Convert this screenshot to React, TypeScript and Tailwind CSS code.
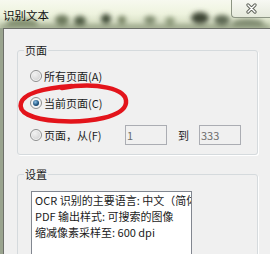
import React from "react";

function Radio({ checked }: { checked?: boolean }) {
  return (
    <span className="w-[12px] h-[12px] rounded-full border border-[#8e8f8f] bg-[#f4f4f4] flex items-center justify-center shrink-0">
      {checked ? (
        <span className="w-[6px] h-[6px] rounded-full bg-[radial-gradient(circle_at_40%_35%,#8cc0e6,#1b4f7a_60%,#0d2c48)]" />
      ) : (
        <span className="w-[8px] h-[8px] rounded-full bg-[radial-gradient(circle_at_35%_30%,#f2f2f2,#cfcfcf)]" />
      )}
    </span>
  );
}

export default function App() {
  return (
    <div className="w-[270px] h-[254px] overflow-hidden flex flex-col bg-[#f0f0f0] font-['Noto_Sans_CJK_SC','Microsoft_YaHei',sans-serif] text-[#1b1b1b]">
      {/* title bar */}
      <div className="relative h-[28px] shrink-0 flex items-start bg-[#eef2e2]">
        <svg className="absolute inset-0" width="270" height="28" viewBox="0 0 270 28">
          <defs>
            <filter id="bl" x="-50%" y="-50%" width="200%" height="200%">
              <feGaussianBlur stdDeviation="2.6" />
            </filter>
            <linearGradient id="tg" x1="0" y1="0" x2="0" y2="1">
              <stop offset="0" stopColor="#f7f9ef" />
              <stop offset="0.5" stopColor="#eef3de" />
              <stop offset="1" stopColor="#c9d2b6" />
            </linearGradient>
          </defs>
          <rect width="270" height="28" fill="url(#tg)" />
          <g filter="url(#bl)">
            <ellipse cx="22" cy="23" rx="16" ry="4" fill="#7f8c6c" />
            <ellipse cx="62" cy="20" rx="7" ry="5" fill="#6a775a" />
            <ellipse cx="80" cy="21" rx="6" ry="5" fill="#4d5a42" />
            <ellipse cx="106" cy="19" rx="5" ry="5" fill="#3e4a36" />
            <ellipse cx="122" cy="20" rx="4" ry="4" fill="#6f7c5c" />
            <ellipse cx="150" cy="20" rx="6" ry="4" fill="#7a876a" />
            <ellipse cx="170" cy="21" rx="5" ry="4" fill="#8d9a7a" />
            <ellipse cx="200" cy="18" rx="9" ry="6" fill="#3c4434" />
            <ellipse cx="222" cy="20" rx="8" ry="5" fill="#5d6852" />
            <ellipse cx="248" cy="23" rx="16" ry="4" fill="#7d886e" />
            <rect x="0" y="25" width="270" height="4" fill="#8e9a7e" />
          </g>
        </svg>
        <span className="relative ml-[3px] mt-[7px] text-[11.5px] leading-[16px] text-[#111]">识别文本</span>
        <div className="relative ml-auto w-[39px] h-[18px] rounded-bl-[4px] border-l border-b border-[#8d9584] bg-[linear-gradient(#f7f8f3,#e6eadc)] flex items-center justify-center">
          <svg width="11" height="11" viewBox="0 0 11 11">
            <path d="M2 2 L9 9 M9 2 L2 9" stroke="#5e6258" strokeWidth="3.2" strokeLinecap="round" />
            <path d="M2 2 L9 9 M9 2 L2 9" stroke="#ffffff" strokeWidth="1.4" strokeLinecap="round" />
          </svg>
        </div>
      </div>

      {/* body */}
      <div className="flex flex-1 min-h-0">
        <div className="w-[3px] bg-[#9aa48f] shrink-0" />
        <div className="flex-1 border-l border-t border-[#6d6f6a] bg-[#f0f0f0] pt-[14px] text-[11px]">
          {/* group 1 */}
          <fieldset className="ml-[13px] w-[241px] border border-[#d5dadd] rounded-[3px] shadow-[1px_1px_0_#ffffff]">
            <legend className="ml-[6px] px-[1px] leading-[14px]">页面</legend>
            <div className="pl-[12px] pt-[12px] pb-[9px] flex flex-col">
              <div className="h-[14px] flex items-center gap-[2px] leading-[14px]">
                <Radio />
                <span>所有页面(A)</span>
              </div>
              <div className="mt-[13px] h-[14px] flex items-center gap-[2px] leading-[14px]">
                <Radio checked />
                <span>当前页面(C)</span>
              </div>
              <div className="mt-[15px] h-[20px] flex items-center">
                <div className="w-[95px] flex items-center gap-[2px] leading-[14px]">
                  <Radio />
                  <span>页面，从(F)</span>
                </div>
                <div className="w-[42px] h-[20px] border border-[#abadb3] bg-[#f0f0f0] pl-[1px] text-[#6d6d6d] leading-[18px]">1</div>
                <span className="ml-[11px] leading-[14px]">到</span>
                <div className="ml-[10px] w-[42px] h-[20px] border border-[#abadb3] bg-[#f0f0f0] pl-[1px] text-[#6d6d6d] leading-[18px]">333</div>
              </div>
            </div>
          </fieldset>

          {/* group 2 */}
          <fieldset className="mt-[12px] ml-[13px] w-[241px] border border-[#d5dadd] rounded-[3px] shadow-[1px_1px_0_#ffffff]">
            <legend className="ml-[6px] px-[1px] leading-[14px]">设置</legend>
            <div className="pl-[13px] pt-[10px] h-[90px]">
              <div className="w-[161px] h-[80px] border border-[#828790] bg-white pl-[3px] overflow-hidden">
                <div className="whitespace-nowrap leading-[16px]">OCR 识别的主要语言: 中文（简体）</div>
                <div className="whitespace-nowrap leading-[16px]">PDF 输出样式: 可搜索的图像</div>
                <div className="whitespace-nowrap leading-[16px]">缩减像素采样至: 600 dpi</div>
              </div>
            </div>
          </fieldset>
        </div>
      </div>

      {/* hand-drawn red circle */}
      <svg className="absolute left-0 top-0 pointer-events-none" width="270" height="254" viewBox="0 0 270 254">
        <path
          d="M62 88 C 95 82, 128 88, 126 103 C 124 117, 90 123, 58 121 C 30 119, 18 112, 21 103 C 24 93, 45 88, 72 86"
          fill="none"
          stroke="#e3141b"
          strokeWidth="4.5"
          strokeLinecap="round"
        />
      </svg>
    </div>
  );
}
